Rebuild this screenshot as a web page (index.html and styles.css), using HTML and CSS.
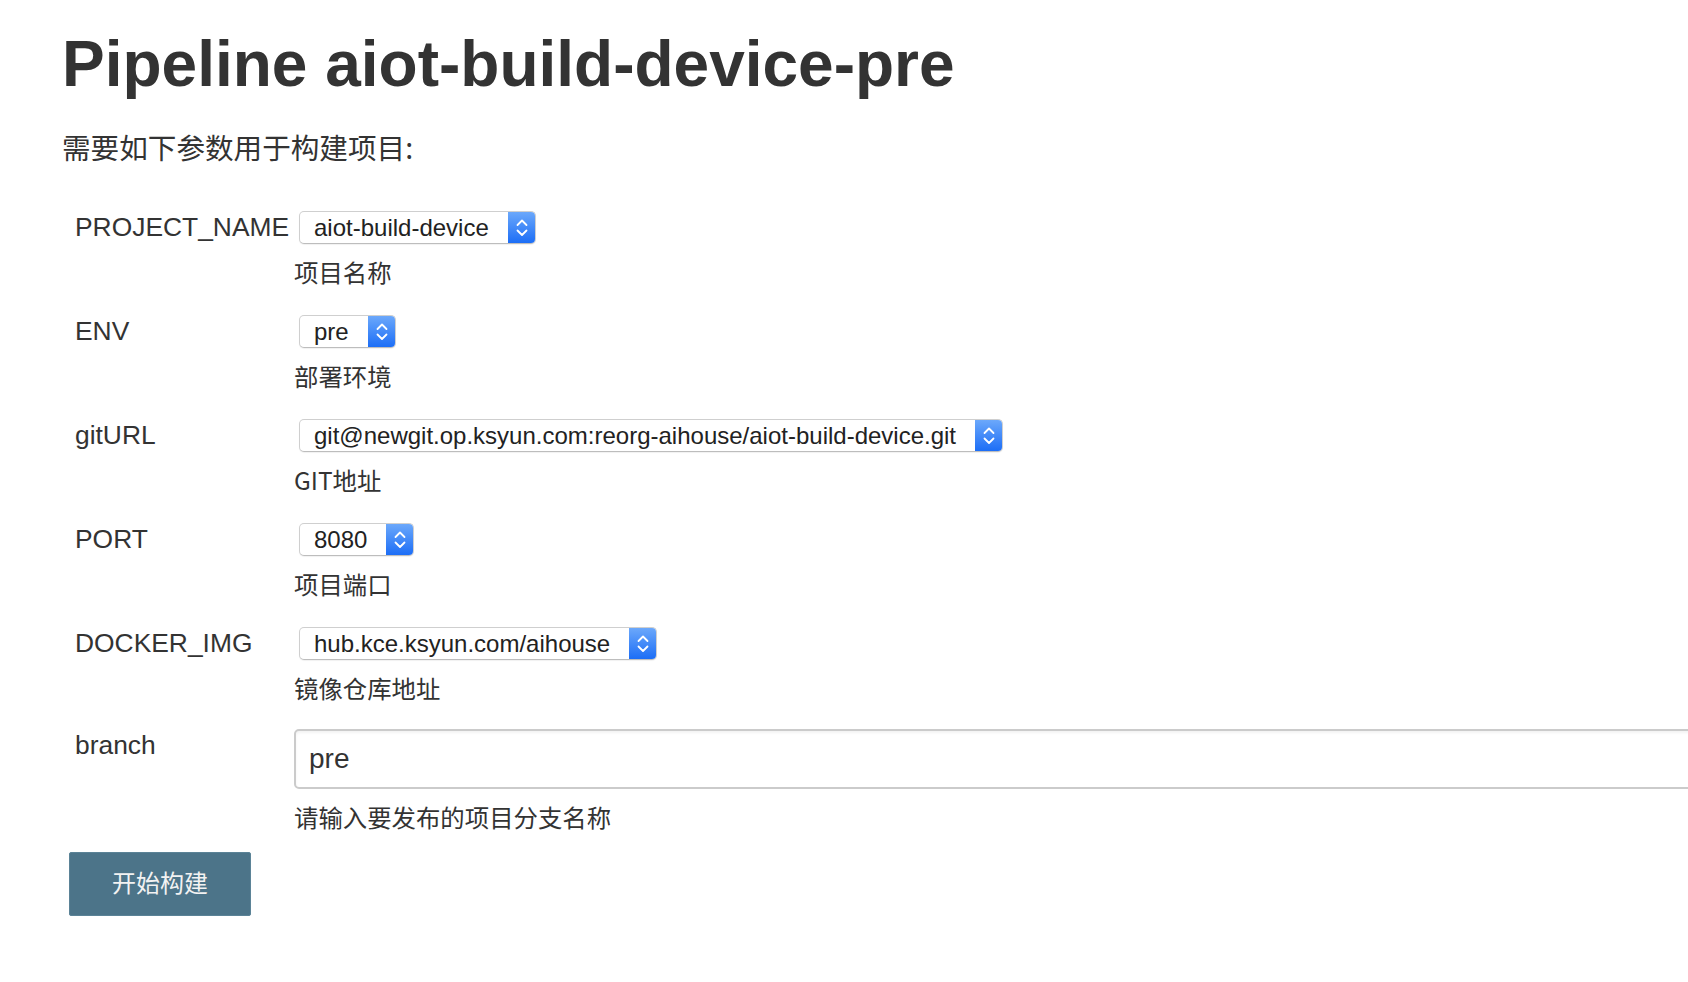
FILE: index.html
```html
<!DOCTYPE html>
<html lang="zh-CN">
<head>
<meta charset="utf-8">
<title>Pipeline aiot-build-device-pre</title>
<link rel="stylesheet" href="styles.css">
</head>
<body>
<main class="page">
  <h1 class="title">Pipeline aiot-build-device-pre</h1>
  <p class="intro">需要如下参数用于构建项目:</p>
  <form class="params">
    <div class="row">
      <div class="label">PROJECT_NAME</div>
      <div class="value">
        <div class="select"><span class="select-text">aiot-build-device</span><span class="select-arrow"><svg viewBox="0 0 28 33" width="28" height="33"><polyline points="9.5,14 14,9.5 18.5,14"/><polyline points="9.5,19.5 14,24 18.5,19.5"/></svg></span></div>
        <div class="desc">项目名称</div>
      </div>
    </div>
    <div class="row">
      <div class="label">ENV</div>
      <div class="value">
        <div class="select"><span class="select-text">pre</span><span class="select-arrow"><svg viewBox="0 0 28 33" width="28" height="33"><polyline points="9.5,14 14,9.5 18.5,14"/><polyline points="9.5,19.5 14,24 18.5,19.5"/></svg></span></div>
        <div class="desc">部署环境</div>
      </div>
    </div>
    <div class="row">
      <div class="label">gitURL</div>
      <div class="value">
        <div class="select"><span class="select-text">git@newgit.op.ksyun.com:reorg-aihouse/aiot-build-device.git</span><span class="select-arrow"><svg viewBox="0 0 28 33" width="28" height="33"><polyline points="9.5,14 14,9.5 18.5,14"/><polyline points="9.5,19.5 14,24 18.5,19.5"/></svg></span></div>
        <div class="desc">GIT地址</div>
      </div>
    </div>
    <div class="row">
      <div class="label">PORT</div>
      <div class="value">
        <div class="select"><span class="select-text">8080</span><span class="select-arrow"><svg viewBox="0 0 28 33" width="28" height="33"><polyline points="9.5,14 14,9.5 18.5,14"/><polyline points="9.5,19.5 14,24 18.5,19.5"/></svg></span></div>
        <div class="desc">项目端口</div>
      </div>
    </div>
    <div class="row">
      <div class="label">DOCKER_IMG</div>
      <div class="value">
        <div class="select"><span class="select-text">hub.kce.ksyun.com/aihouse</span><span class="select-arrow"><svg viewBox="0 0 28 33" width="28" height="33"><polyline points="9.5,14 14,9.5 18.5,14"/><polyline points="9.5,19.5 14,24 18.5,19.5"/></svg></span></div>
        <div class="desc">镜像仓库地址</div>
      </div>
    </div>
    <div class="row row-branch">
      <div class="label">branch</div>
      <div class="value">
        <input class="text-input" type="text" value="pre">
        <div class="desc">请输入要发布的项目分支名称</div>
      </div>
    </div>
  </form>
  <button class="build-btn" type="button">开始构建</button>
</main>
</body>
</html>
```

FILE: styles.css
```css
html, body {
  margin: 0;
  padding: 0;
  background: #ffffff;
  overflow: hidden;
}

body {
  font-family: "Liberation Sans", "Noto Sans CJK SC", sans-serif;
  color: #333333;
}

.page {
  padding: 28px 0 0 58px;
}

.title {
  margin: 0 0 0 4px;
  font-size: 64px;
  line-height: 72px;
  font-weight: bold;
  color: #333333;
}

.intro {
  margin: 27px 0 0 4px;
  font-family: "Noto Sans CJK SC", sans-serif;
  font-size: 28.6px;
  line-height: 40px;
  color: #333333;
}

.params {
  margin: 44px 0 0 17px;
  display: flex;
  flex-direction: column;
  gap: 25px;
}

.row {
  display: grid;
  grid-template-columns: 219px auto;
}

.row-branch {
  margin-top: -2px;
}

.label {
  font-size: 26.4px;
  line-height: 33px;
  color: #333333;
}

.value {
  display: flex;
  flex-direction: column;
  align-items: flex-start;
}

.select {
  display: inline-flex;
  align-items: stretch;
  height: 33px;
  box-sizing: border-box;
  margin-left: 5px;
  border: 1px solid #cfcfcf;
  border-bottom-color: #bdbdbd;
  border-radius: 5px;
  background: #ffffff;
  box-shadow: 0 1px 1px rgba(0, 0, 0, 0.06);
  overflow: hidden;
}

.select-text {
  padding: 0 19px 0 14px;
  font-size: 24px;
  line-height: 31px;
  color: #222222;
  white-space: nowrap;
}

.select-arrow {
  display: flex;
  width: 28px;
  margin: -1px -1px -1px 0;
  background: linear-gradient(#6eaafb, #1a6cf6);
  border-radius: 0 5px 5px 0;
}

.select-arrow svg {
  display: block;
  fill: none;
  stroke: #ffffff;
  stroke-width: 1.8;
  stroke-linecap: round;
  stroke-linejoin: round;
}

.desc {
  margin-top: 10px;
  font-family: "Noto Sans CJK SC", sans-serif;
  font-size: 24.4px;
  line-height: 36px;
  color: #333333;
}

.text-input {
  display: block;
  box-sizing: border-box;
  width: 1500px;
  height: 60px;
  margin: 0;
  padding: 0 13px;
  border: 2px solid #cbcbcb;
  border-radius: 5px;
  box-shadow: inset 0 2px 3px rgba(0, 0, 0, 0.05);
  font-family: "Liberation Sans", sans-serif;
  font-size: 28px;
  color: #333333;
  outline: none;
}

.build-btn {
  display: block;
  margin: 17px 0 0 11px;
  width: 182px;
  height: 64px;
  padding: 0 0 5px;
  border: 1px solid #5b8397;
  border-radius: 2px;
  background: #4c7489;
  color: #f2f2f2;
  font-family: "Noto Sans CJK SC", sans-serif;
  font-size: 24px;
  cursor: pointer;
}
```
